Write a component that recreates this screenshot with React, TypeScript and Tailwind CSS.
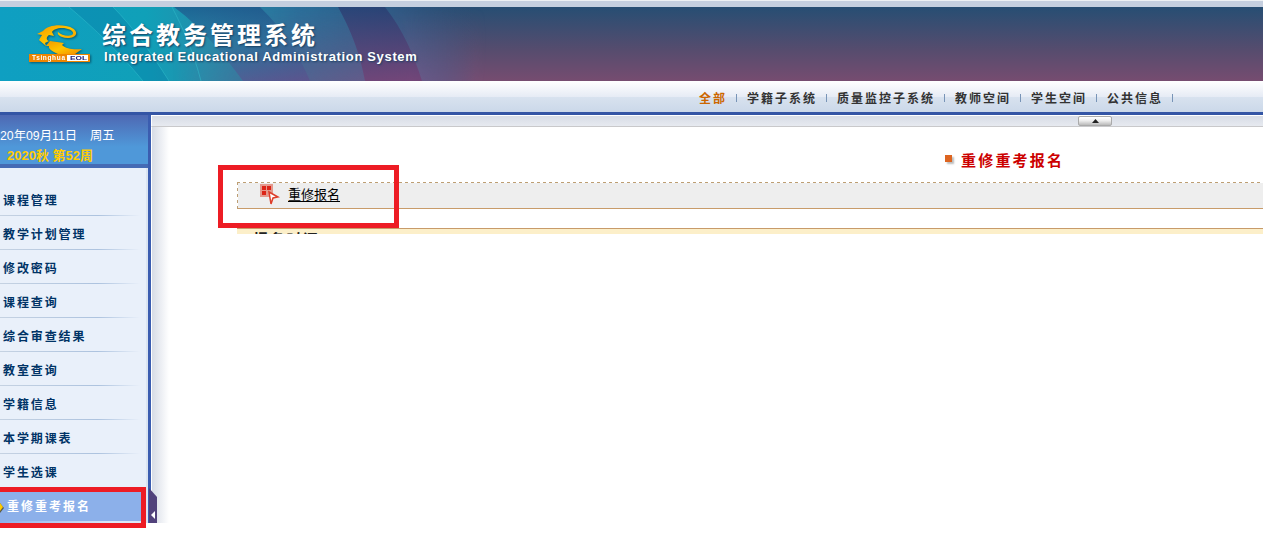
import React from "react";

const menu = ["课程管理", "教学计划管理", "修改密码", "课程查询", "综合审查结果", "教室查询", "学籍信息", "本学期课表", "学生选课"];

const nav = [
  { label: "全部", cls: "ml-[699px] w-[37px] text-[#cc6600]" },
  { label: "学籍子系统", cls: "ml-[11px] w-[79px]" },
  { label: "质量监控子系统", cls: "ml-[11px] w-[107px]" },
  { label: "教师空间", cls: "ml-[11px] w-[65px]" },
  { label: "学生空间", cls: "ml-[11px] w-[65px]" },
  { label: "公共信息", cls: "ml-[11px] w-[65px]" },
];

function Logo() {
  return (
    <svg className="absolute left-[28px] top-[16px] h-[42px] w-[64px] drop-shadow-[1px_1px_1px_rgba(0,40,60,0.6)]" viewBox="0 0 64 42">
      <defs>
        <linearGradient id="gold" x1="0" y1="0" x2="1" y2="1">
          <stop offset="0" stopColor="#f29a00" />
          <stop offset="0.5" stopColor="#ffc400" />
          <stop offset="1" stopColor="#f08a00" />
        </linearGradient>
      </defs>
      <path d="M9 11L15 8C19 3 29 1 38 3C45 4 49 8 48 11C47 15 39 16 34 14C31 13 29 11 30 9C33 12 40 14 44 12C48 9 41 5 34 5C29 5 25 7 24 9L26 13L21 12C18 14 18 17 21 18L17 20L18 23L11 17L14 12Z" fill="url(#gold)" />
      <path d="M22 18L36 20L34 22C38 26 46 27 54 26L47 31H30C24 28 20 26 21 23L18 23Z" fill="url(#gold)" />
      <rect x="1" y="31" width="61" height="8" fill="#ee8500" />
      <rect x="39" y="32" width="21" height="6" fill="#fff" />
      <text x="4" y="37.3" fontFamily="Liberation Sans, sans-serif" fontSize="6.5" fontWeight="700" fill="#fff" textLength="33">Tsinghua</text>
      <text x="42" y="37.2" fontFamily="Liberation Sans, sans-serif" fontSize="6" fontWeight="700" fill="#20207a" textLength="17" lengthAdjust="spacingAndGlyphs">EOL</text>
    </svg>
  );
}

function Banner() {
  return (
    <header className="relative h-[74px] overflow-hidden bg-[linear-gradient(#274e73,#564c6e_58%,#764c70)]">
      <svg className="absolute left-0 top-0 h-[74px] w-[540px]" viewBox="0 0 540 74">
        <defs>
          <linearGradient id="sea">
            <stop offset="0" stopColor="#0f9fc2" />
            <stop offset="0.27" stopColor="#10a0b8" />
            <stop offset="0.38" stopColor="#238fac" />
            <stop offset="0.55" stopColor="#2a6f9a" />
            <stop offset="0.74" stopColor="#2d5883" />
            <stop offset="0.88" stopColor="#2d5078" stopOpacity="0" />
          </linearGradient>
          <linearGradient id="plum" x1="0" y1="0" x2="0" y2="1">
            <stop offset="0" stopColor="#6d5f8c" stopOpacity="0" />
            <stop offset="1" stopColor="#755a8a" stopOpacity="0.9" />
          </linearGradient>
          <linearGradient id="fade">
            <stop offset="0.32" stopColor="#fff" stopOpacity="0" />
            <stop offset="0.6" stopColor="#fff" stopOpacity="0.7" />
            <stop offset="0.76" stopColor="#fff" />
            <stop offset="0.9" stopColor="#fff" stopOpacity="0" />
          </linearGradient>
          <linearGradient id="violet" x1="0" y1="0" x2="0" y2="1">
            <stop offset="0" stopColor="#1c4c85" stopOpacity="0.65" />
            <stop offset="0.5" stopColor="#2c5a90" stopOpacity="0.3" />
            <stop offset="1" stopColor="#64478c" stopOpacity="0.5" />
          </linearGradient>
          <linearGradient id="wine" x1="0" y1="0" x2="0" y2="1">
            <stop offset="0" stopColor="#273c71" stopOpacity="0.75" />
            <stop offset="1" stopColor="#763b70" stopOpacity="0.65" />
          </linearGradient>
          <mask id="m"><rect width="540" height="74" fill="url(#fade)" /></mask>
        </defs>
        <rect width="540" height="74" fill="url(#sea)" />
        <path d="M69 0C95 22 120 46 143 74H169C150 44 133 20 113 0Z" fill="#087ea8" opacity="0.4" />
        <rect width="540" height="74" fill="url(#plum)" mask="url(#m)" />
        <path d="M174 0H260C283 22 299 47 310 74H243C225 50 205 23 174 0Z" fill="url(#violet)" />
        <path d="M338 0H385C403 23 414 48 422 74H365C360 47 351 23 338 0Z" fill="url(#wine)" />
        <path d="M69 0C95 22 120 46 143 74M113 0C133 20 150 44 169 74M172 0C184 23 194 47 201 74" fill="none" stroke="#35bfce" strokeWidth="0.8" opacity="0.6" />
      </svg>
      <Logo />
      <div className="absolute left-[102px] top-[11px] whitespace-nowrap font-['Noto_Sans_CJK_SC',sans-serif] text-[24px] font-bold leading-[32px] tracking-[3px] text-white [text-shadow:1px_1px_2px_#173f62]">综合教务管理系统</div>
      <div className="absolute left-[104px] top-[41px] whitespace-nowrap font-['Liberation_Sans',sans-serif] text-[13px] font-bold leading-[17px] tracking-[0.65px] text-white [text-shadow:1px_1px_2px_#173f62]">Integrated Educational Administration System</div>
    </header>
  );
}

function Sidebar() {
  return (
    <aside className="relative flex h-[408px] w-[151px] shrink-0 bg-[#3b5db0]">
      <div className="w-[148px]">
        <div className="h-[53px] overflow-hidden whitespace-nowrap border-b-4 border-[#456bb5] bg-[linear-gradient(#4e68b3,#4f98d9_65%)] font-['Liberation_Sans','Noto_Sans_CJK_SC',sans-serif]">
          <div className="pt-[12px] text-[12.3px] leading-[18px] text-white"><span>20年09月11日</span><span className="ml-[13px]">周五</span></div>
          <div className="pl-[7px] pt-[2px] text-[13px] font-bold leading-[18px] text-[#ffcc00]">2020秋 第52周</div>
        </div>
        <div className="h-[355px] border-r-2 border-[#dae4f1] bg-[#e9f0fa] pt-[14px]">
          {menu.map((item) => (
            <div key={item} className="flex h-[34px] flex-col">
              <div className="h-[33px] pl-[3px] pt-[7px] text-[12px] font-bold leading-[22px] tracking-[1.9px] text-[#003366]">{item}</div>
              <div className="h-px w-[140px] bg-[linear-gradient(90deg,#c5d2e2,#adc3df_70%,#e9f0fa)]" />
            </div>
          ))}
        </div>
      </div>
      <div className="absolute left-[-5px] top-[372px] flex h-[41px] w-[151px] border-5 border-[#ed1c24] bg-[#8cb0ea] pb-[2px]">
        <svg className="mt-[10px] h-[11px] w-[4px]" viewBox="0 0 4 11"><path d="M0 1L4 6L0 11" fill="#5a5948" /><path d="M0 1L3 5L0 9" fill="#ffcc00" /></svg>
        <span className="ml-[3px] mt-[3px] text-[12px] font-bold leading-[22px] tracking-[2px] text-white">重修重考报名</span>
        <span className="absolute bottom-0 left-0 h-[2px] w-[141px] bg-[linear-gradient(90deg,#8cb0ea,#dce8f7_80%)]" />
      </div>
      <svg className="absolute left-[149px] top-[373px] h-[35px] w-[8px]" viewBox="0 0 8 35"><path d="M0 0L8 9V35H0Z" fill="#51427b" /><path d="M6 23V31L2 27Z" fill="#fff" /></svg>
    </aside>
  );
}

export default function App() {
  return (
    <div className="h-[546px] w-[1263px] overflow-hidden bg-white font-['Noto_Sans_CJK_SC',sans-serif]">
      <div className="h-[7px] border-t border-[#edf0f3] bg-[#c5cfdf]" />
      <Banner />
      <nav className="flex h-[34px] border-b-3 border-[#3455a5] bg-[linear-gradient(#ffffff,#e6ebf5_16px,#d8e2ef_16px,#cbd8e9_31px)] text-[12px] font-bold leading-[34px] tracking-[2px] text-[#333]">
        {nav.map((item) => (
          <div key={item.label} className={`${item.cls} relative shrink-0 whitespace-nowrap`}>
            {item.label}
            <span className="absolute right-[-1px] top-[13px] h-[8px] w-px bg-[#7894b7]" />
          </div>
        ))}
      </nav>
      <div className="flex">
        <Sidebar />
        <main className="h-[408px] min-w-0 grow">
          <div className="relative h-[12px] border-b border-l border-t border-b-[#c9c9cb] border-l-white border-t-white bg-[linear-gradient(#d7dce6,#e7eaf0)]">
            <div className="absolute left-[926px] top-0 flex h-[10px] w-[34px] items-center justify-center rounded-[2px] border border-[#aaa] bg-[linear-gradient(#fff,#eee_45%,#bbb)]">
              <svg className="h-[4px] w-[7px]" viewBox="0 0 7 4"><path d="M3.5 0L7 4H0Z" fill="#222" /></svg>
            </div>
          </div>
          <div className="h-[396px] bg-[linear-gradient(90deg,#fff_1px,#d7dce6_1px,#fff_18px)] pl-[86px]">
            <div className="flex h-[55px] pl-[708px] pt-[22px]">
              <span className="mt-[6px] h-[7px] w-[7px] bg-[#dd6420] shadow-[2px_2px_2px_#bbb]" />
              <span className="ml-[9px] text-[15px] font-bold leading-[22px] tracking-[2.2px] text-[#cc0000]">重修重考报名</span>
            </div>
            <div className="relative h-[27px] border-b border-[#c89b6a] bg-[#eeeeee]">
              <div className="absolute left-0 top-0 h-px w-full bg-[repeating-linear-gradient(90deg,#bd9e73_0_3px,#fff_3px_6px)]" />
              <div className="absolute left-0 top-0 h-[27px] w-px bg-[repeating-linear-gradient(#bd9e73_0_3px,#fff_3px_6px)]" />
              <div className="flex pl-[23px] pt-[2px]">
                <svg className="h-[21px] w-[20px]" viewBox="0 0 20 21"><path d="M0 0H13V13H0Z" fill="#e49a8e" /><path d="M2 2H6V6H2ZM7 2H11V6H7ZM2 7H6V11H2Z" fill="#dc2417" /><path d="M9 8L18 13L13 14L11 20Z" fill="#fff" stroke="#de3e2b" strokeWidth="1.5" /></svg>
                <a className="ml-[8px] text-[13px] leading-[19px] text-black underline underline-offset-2">重修报名</a>
              </div>
              <div className="absolute left-[-19px] top-[-17px] h-[63px] w-[181px] border-5 border-[#ed1c24]" />
            </div>
            <div className="mt-[19px] h-[6px] overflow-hidden border-t border-[#c89b6a] bg-[#fcefc9] pl-[16px] pt-px text-[15px] font-bold leading-[18px] tracking-[1.6px] text-[#222]">报名时间</div>
          </div>
        </main>
      </div>
    </div>
  );
}
